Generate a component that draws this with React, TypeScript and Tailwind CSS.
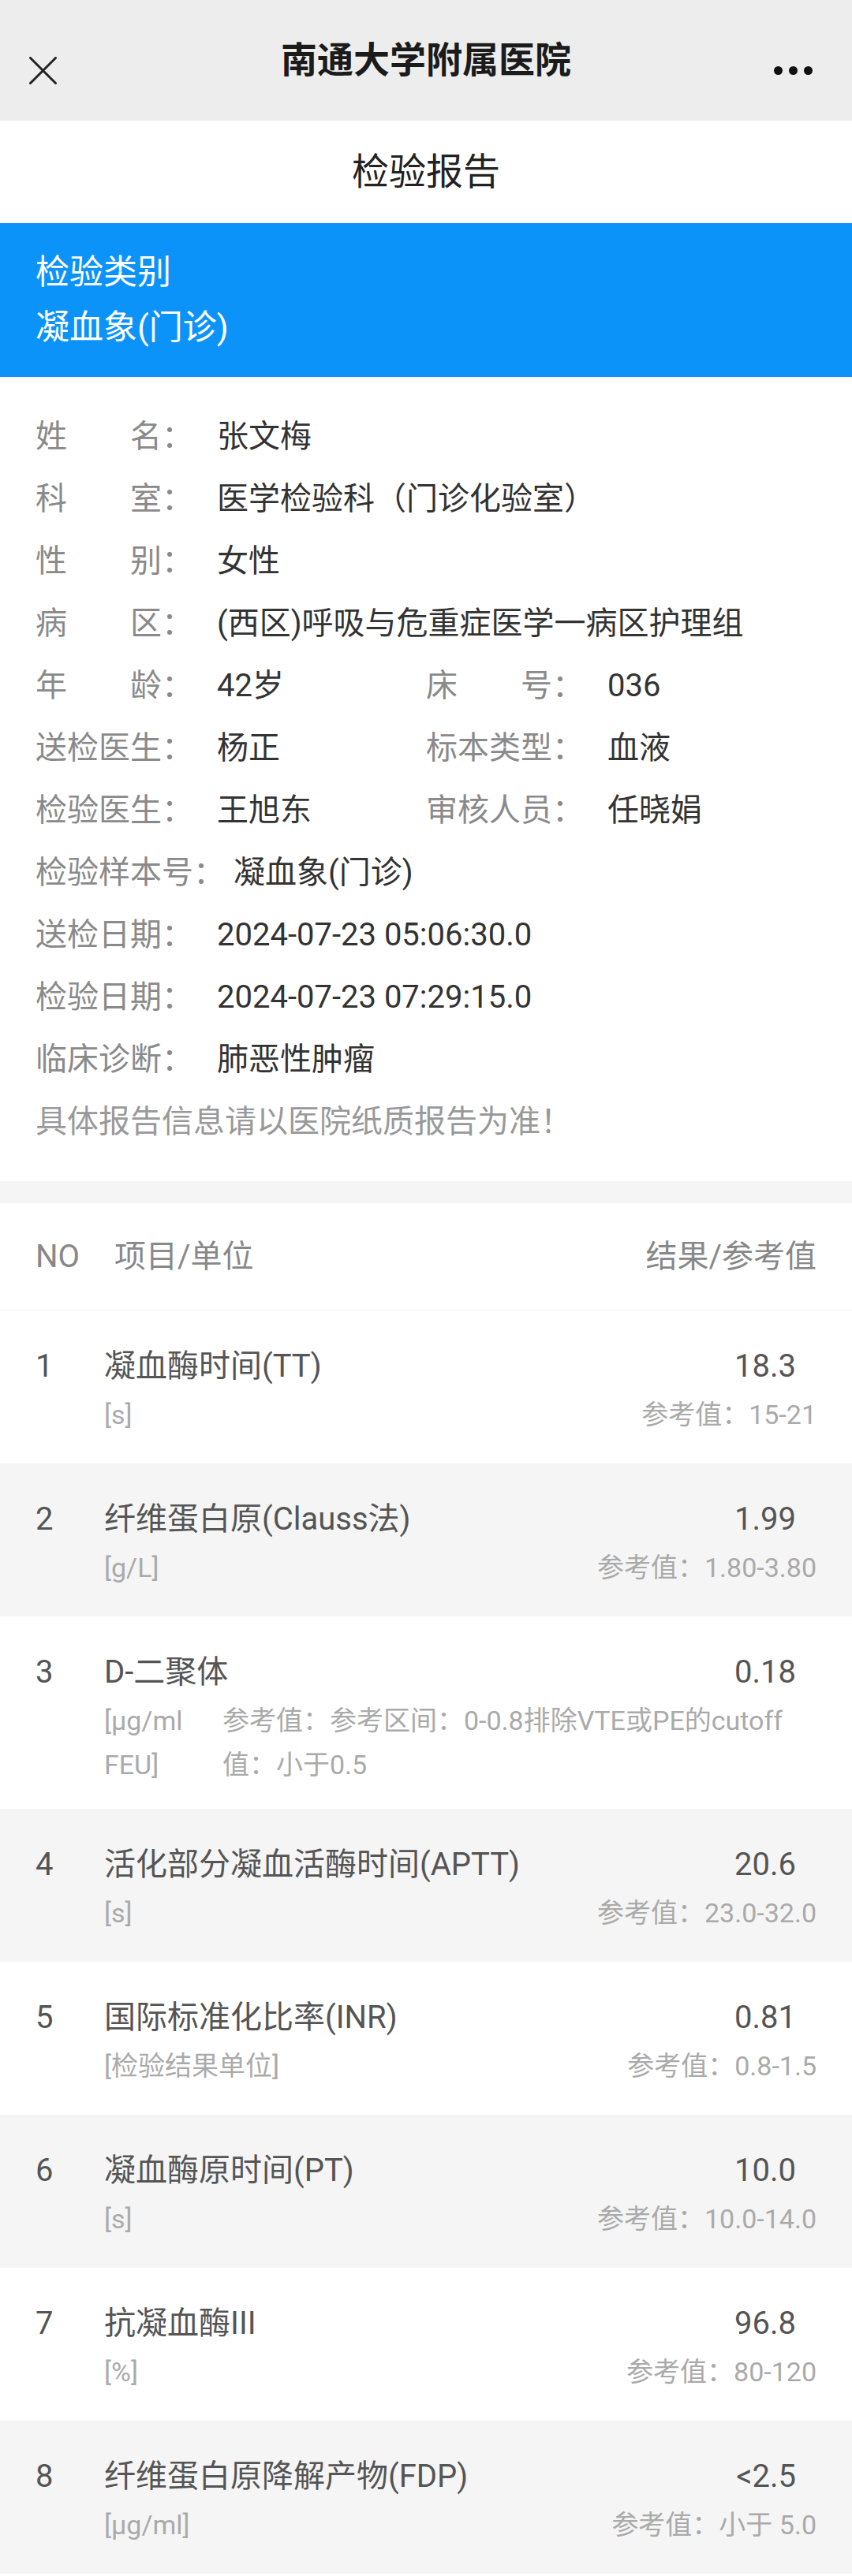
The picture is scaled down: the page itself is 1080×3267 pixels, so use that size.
import React from "react";

type InfoCell = { label: string; value: string };

const infoRows: (InfoCell | [InfoCell, InfoCell])[] = [
  { label: "姓名", value: "张文梅" },
  { label: "科室", value: "医学检验科（门诊化验室）" },
  { label: "性别", value: "女性" },
  { label: "病区", value: "(西区)呼吸与危重症医学一病区护理组" },
  [
    { label: "年龄", value: "42岁" },
    { label: "床号", value: "036" },
  ],
  [
    { label: "送检医生", value: "杨正" },
    { label: "标本类型", value: "血液" },
  ],
  [
    { label: "检验医生", value: "王旭东" },
    { label: "审核人员", value: "任晓娟" },
  ],
  { label: "检验样本号", value: "凝血象(门诊)" },
  { label: "送检日期", value: "2024-07-23 05:06:30.0" },
  { label: "检验日期", value: "2024-07-23 07:29:15.0" },
  { label: "临床诊断", value: "肺恶性肿瘤" },
];

type Item = {
  no: number;
  name: string;
  value: string;
  unit: string[];
  ref: string[];
};

const items: Item[] = [
  { no: 1, name: "凝血酶时间(TT)", value: "18.3", unit: ["[s]"], ref: ["参考值：15-21"] },
  { no: 2, name: "纤维蛋白原(Clauss法)", value: "1.99", unit: ["[g/L]"], ref: ["参考值：1.80-3.80"] },
  {
    no: 3,
    name: "D-二聚体",
    value: "0.18",
    unit: ["[μg/ml", "FEU]"],
    ref: ["参考值：参考区间：0-0.8排除VTE或PE的cutoff", "值：小于0.5"],
  },
  { no: 4, name: "活化部分凝血活酶时间(APTT)", value: "20.6", unit: ["[s]"], ref: ["参考值：23.0-32.0"] },
  { no: 5, name: "国际标准化比率(INR)", value: "0.81", unit: ["[检验结果单位]"], ref: ["参考值：0.8-1.5"] },
  { no: 6, name: "凝血酶原时间(PT)", value: "10.0", unit: ["[s]"], ref: ["参考值：10.0-14.0"] },
  { no: 7, name: "抗凝血酶III", value: "96.8", unit: ["[%]"], ref: ["参考值：80-120"] },
  { no: 8, name: "纤维蛋白原降解产物(FDP)", value: "<2.5", unit: ["[μg/ml]"], ref: ["参考值：小于 5.0"] },
];

function Label({ text, wide }: { text: string; wide?: boolean }) {
  return (
    <div className={`flex shrink-0 text-[#8a8a8a] ${wide ? "w-[251px]" : "w-[230px]"}`}>
      {text.length === 2 ? (
        <span className="flex w-[160px] justify-between">
          <span>{text[0]}</span>
          <span>{text[1]}</span>
        </span>
      ) : (
        <span>{text}</span>
      )}
      <span>：</span>
    </div>
  );
}

function TopBar() {
  return (
    <div className="relative flex h-[153px] items-center justify-center bg-[#ededed]">
      <svg className="absolute left-[37px] top-[72px]" width="35" height="35" viewBox="0 0 35 35">
        <path d="M1.5 1.5 L33.5 33.5 M33.5 1.5 L1.5 33.5" stroke="#222" strokeWidth="3" strokeLinecap="round" />
      </svg>
      <h1 className="text-[46px] font-semibold text-[#1b1b1b]">南通大学附属医院</h1>
      <div className="absolute right-[50px] top-[84px] flex gap-[8px]">
        <span className="h-[11px] w-[11px] rounded-full bg-[#111]" />
        <span className="h-[11px] w-[11px] rounded-full bg-[#111]" />
        <span className="h-[11px] w-[11px] rounded-full bg-[#111]" />
      </div>
    </div>
  );
}

function InfoSection() {
  return (
    <div className="bg-white px-[45px] pb-[36px] pt-[36px] text-[40px] leading-[79px]">
      {infoRows.map((row, i) =>
        Array.isArray(row) ? (
          <div key={i} className="flex">
            <div className="flex w-[495px] shrink-0">
              <Label text={row[0].label} />
              <span className="text-[#333]">{row[0].value}</span>
            </div>
            <div className="flex">
              <Label text={row[1].label} />
              <span className="text-[#333]">{row[1].value}</span>
            </div>
          </div>
        ) : (
          <div key={i} className="flex">
            <Label text={row.label} wide={row.label.length === 5} />
            <span className="whitespace-nowrap text-[#333]">{row.value}</span>
          </div>
        )
      )}
      <p className="text-[#999]">具体报告信息请以医院纸质报告为准！</p>
    </div>
  );
}

function ItemRow({ item }: { item: Item }) {
  const multi = item.unit.length > 1;
  return (
    <div
      className={`flex px-[45px] pt-[44px] ${multi ? "pb-[28px]" : "pb-[34px]"} ${
        item.no % 2 === 0 ? "bg-[#f5f5f5]" : "bg-white"
      }`}
    >
      <div className="w-[87px] shrink-0 text-[40px] leading-[54px] text-[#555]">{item.no}</div>
      <div className="flex-1">
        <div className="flex justify-between text-[40px] leading-[54px] text-[#555]">
          <span className="whitespace-nowrap">{item.name}</span>
          <span className="pr-[26px]">{item.value}</span>
        </div>
        <div className="mt-[6px] flex justify-between text-[34px] leading-[56px] text-[#aaa]">
          <div className={multi ? "w-[150px] shrink-0" : ""}>
            {item.unit.map((u) => (
              <div key={u} className="whitespace-nowrap">{u}</div>
            ))}
          </div>
          <div className={multi ? "flex-1" : "text-right"}>
            {item.ref.map((r) => (
              <div key={r} className="whitespace-nowrap">{r}</div>
            ))}
          </div>
        </div>
      </div>
    </div>
  );
}

export default function App() {
  return (
    <main className="w-[1080px] bg-white font-['Roboto','Noto_Sans_CJK_SC',sans-serif]">
      <TopBar />

      <div className="flex h-[130px] items-center justify-center bg-white">
        <h2 className="text-[47px] text-[#222]">检验报告</h2>
      </div>

      <div className="bg-[#0c93fa] px-[45px] pb-[28px] pt-[27px] text-[43px] leading-[70px] text-white">
        <p>检验类别</p>
        <p>凝血象(门诊)</p>
      </div>

      <InfoSection />

      <div className="h-[28px] bg-[#f5f5f5]" />

      <div className="flex h-[136px] items-center border-b border-[#f2f2f2] px-[45px] text-[40px] text-[#888]">
        <span className="w-[100px]">NO</span>
        <span className="flex-1">项目/单位</span>
        <span>结果/参考值</span>
      </div>

      {items.map((it) => (
        <ItemRow key={it.no} item={it} />
      ))}
    </main>
  );
}
